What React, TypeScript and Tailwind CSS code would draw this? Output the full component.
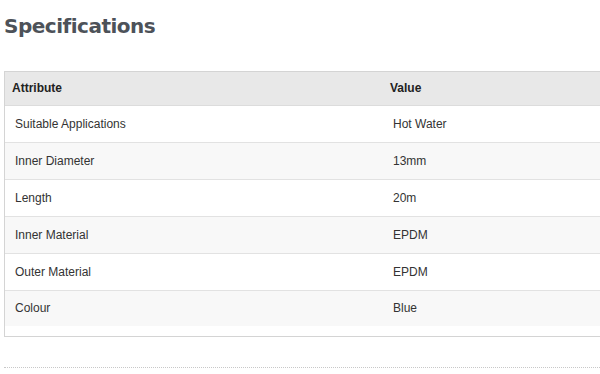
const specs = [
  { attribute: "Suitable Applications", value: "Hot Water" },
  { attribute: "Inner Diameter", value: "13mm" },
  { attribute: "Length", value: "20m" },
  { attribute: "Inner Material", value: "EPDM" },
  { attribute: "Outer Material", value: "EPDM" },
  { attribute: "Colour", value: "Blue" },
];

export default function App() {
  return (
    <div className="min-h-[374px] w-[600px] overflow-hidden bg-white pl-[4px] pt-[12px] font-['Liberation_Sans',Arial,sans-serif] text-[12px] text-[#333]">
      <h2 className="font-['DejaVu_Sans',sans-serif] text-[20px] font-bold leading-[28px] tracking-[-0.5px] text-[#4d5259]">
        Specifications
      </h2>

      <div className="mt-[31px] w-[760px] border border-[#d4d4d4] pb-[10px]">
        <table className="w-full border-collapse">
          <thead>
            <tr className="h-[33px] border-b border-[#dcdcdc] bg-[#e8e8e8]">
              <th className="w-[377px] px-[7px] text-left font-bold text-[#222]">Attribute</th>
              <th className="px-[8px] text-left font-bold text-[#222]">Value</th>
            </tr>
          </thead>
          <tbody>
            {specs.map((row, i) => (
              <tr
                key={row.attribute}
                className={
                  i === specs.length - 1
                    ? "h-[36px] bg-[#f8f8f8]"
                    : i % 2 === 1
                      ? "h-[37px] border-b border-[#e2e2e2] bg-[#f8f8f8]"
                      : "h-[37px] border-b border-[#e2e2e2] bg-white"
                }
              >
                <td className="px-[10px]">{row.attribute}</td>
                <td className="px-[11px]">{row.value}</td>
              </tr>
            ))}
          </tbody>
        </table>
      </div>

      <div className="mt-[30px] w-[596px] border-t border-dotted border-[#c8c8c8]" />
    </div>
  );
}
